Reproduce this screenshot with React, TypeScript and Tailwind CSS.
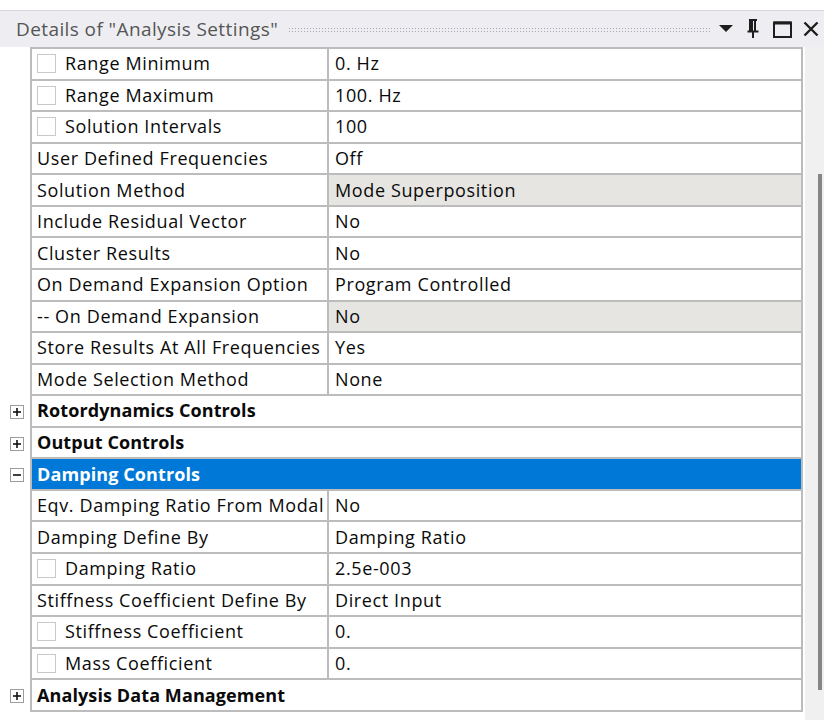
import React from "react";

type Row =
  | { kind: "prop"; label: string; value: string; check?: boolean; shaded?: boolean }
  | { kind: "group"; label: string; open?: boolean; selected?: boolean };

const rows: Row[] = [
  { kind: "prop", label: "Range Minimum", value: "0. Hz", check: true },
  { kind: "prop", label: "Range Maximum", value: "100. Hz", check: true },
  { kind: "prop", label: "Solution Intervals", value: "100", check: true },
  { kind: "prop", label: "User Defined Frequencies", value: "Off" },
  { kind: "prop", label: "Solution Method", value: "Mode Superposition", shaded: true },
  { kind: "prop", label: "Include Residual Vector", value: "No" },
  { kind: "prop", label: "Cluster Results", value: "No" },
  { kind: "prop", label: "On Demand Expansion Option", value: "Program Controlled" },
  { kind: "prop", label: "-- On Demand Expansion", value: "No", shaded: true },
  { kind: "prop", label: "Store Results At All Frequencies", value: "Yes" },
  { kind: "prop", label: "Mode Selection Method", value: "None" },
  { kind: "group", label: "Rotordynamics Controls" },
  { kind: "group", label: "Output Controls" },
  { kind: "group", label: "Damping Controls", open: true, selected: true },
  { kind: "prop", label: "Eqv. Damping Ratio From Modal", value: "No" },
  { kind: "prop", label: "Damping Define By", value: "Damping Ratio" },
  { kind: "prop", label: "Damping Ratio", value: "2.5e-003", check: true },
  { kind: "prop", label: "Stiffness Coefficient Define By", value: "Direct Input" },
  { kind: "prop", label: "Stiffness Coefficient", value: "0.", check: true },
  { kind: "prop", label: "Mass Coefficient", value: "0.", check: true },
  { kind: "group", label: "Analysis Data Management" },
];

function ExpandBox({ open }: { open?: boolean }) {
  return (
    <svg width="14" height="14" viewBox="0 0 14 14" className="block">
      <rect x="0.5" y="0.5" width="13" height="13" fill="#fff" stroke="#9c9c9c" />
      <line x1="3" y1="7" x2="11" y2="7" stroke="#111" strokeWidth="1.6" />
      {!open && <line x1="7" y1="3" x2="7" y2="11" stroke="#111" strokeWidth="1.6" />}
    </svg>
  );
}

function TitleIcons() {
  return (
    <div className="flex items-center h-full">
      {/* dropdown arrow */}
      <svg width="14" height="8" viewBox="0 0 14 8" className="ml-[7px]">
        <path d="M0 0 L14 0 L7 7 Z" fill="#1e1e1e" />
      </svg>
      {/* pin */}
      <svg width="12" height="20" viewBox="0 0 12 20" className="ml-[14px]">
        <path d="M2 1 H10 M3 1 V12 M8 1 V12 M0.5 12.5 H11.5 M6 13 V19" stroke="#1e1e1e" strokeWidth="2" fill="none" />
        <path d="M3 2 H6 V12 H3 Z" fill="#1e1e1e" />
      </svg>
      {/* maximize */}
      <svg width="19" height="17" viewBox="0 0 19 17" className="ml-[14px]">
        <rect x="1" y="1.5" width="17" height="14.5" fill="none" stroke="#1e1e1e" strokeWidth="2" />
        <line x1="1" y1="2" x2="18" y2="2" stroke="#1e1e1e" strokeWidth="3" />
      </svg>
      {/* close */}
      <svg width="16" height="16" viewBox="0 0 16 16" className="ml-[11px]">
        <path d="M1.5 1.5 L14.5 14.5 M14.5 1.5 L1.5 14.5" stroke="#1e1e1e" strokeWidth="2.4" />
      </svg>
    </div>
  );
}

function CheckBox() {
  return <div className="w-[19px] h-[19px] border border-[#c9c9c9] bg-white shrink-0" />;
}

function PropRow({ row }: { row: Extract<Row, { kind: "prop" }> }) {
  return (
    <div className="flex h-[31.57px] border-b-2 border-[#bcbcbc]">
      <div className="w-[297px] shrink-0 flex items-center pl-[5px] border-r-2 border-[#bcbcbc] overflow-hidden whitespace-nowrap">
        {row.check && (
          <>
            <CheckBox />
            <div className="w-[9px] shrink-0" />
          </>
        )}
        <span>{row.label}</span>
      </div>
      <div
        className={`flex-1 flex items-center pl-[6px] whitespace-nowrap ${
          row.shaded ? "bg-[#e6e5e2]" : "bg-white"
        }`}
      >
        {row.value}
      </div>
    </div>
  );
}

function GroupRow({ row }: { row: Extract<Row, { kind: "group" }> }) {
  return (
    <div
      className={`flex items-center h-[31.57px] border-b-2 border-[#bcbcbc] pl-[5px] font-bold tracking-[0.1px] ${
        row.selected ? "bg-[#0078d7] text-white" : "bg-white"
      }`}
    >
      {row.label}
    </div>
  );
}

export default function App() {
  return (
    <div
      className="w-[824px] h-[720px] bg-white overflow-hidden flex flex-col text-[#0a0a0a] text-[18px] font-medium tracking-[0.62px]"
      style={{ fontFamily: '"Open Sans", "Noto Sans", "Liberation Sans", sans-serif' }}
    >
      <div className="h-[10px] shrink-0 bg-white" />
      {/* panel caption */}
      <div className="h-[37px] shrink-0 bg-[#eeeef2] border-t border-[#d6d6de] flex items-center pl-[16px] pr-[5px]">
        <span className="text-[#555555] text-[19px] font-normal tracking-[0.4px] whitespace-nowrap">Details of "Analysis Settings"</span>
        <div className="flex-1 h-[6px] ml-[10px] mt-[1px] bg-[radial-gradient(circle,#a8a8b0_0.8px,transparent_1px)] bg-[length:3px_3px]" />
        <TitleIcons />
      </div>
      {/* property grid */}
      <div className="flex flex-1 min-h-0">
        <div className="w-[805px] shrink-0 flex">
          {/* expander gutter */}
          <div className="w-[30px] shrink-0 flex flex-col pt-[2px]">
            {rows.map((r, i) => (
              <div key={i} className="h-[31.57px] flex items-center pl-[10px]">
                {r.kind === "group" && <ExpandBox open={r.open} />}
              </div>
            ))}
          </div>
          <div className="w-[773px] shrink-0 self-start border-2 border-b-0 border-[#bcbcbc]">
            {rows.map((r, i) =>
              r.kind === "prop" ? <PropRow key={i} row={r} /> : <GroupRow key={i} row={r} />
            )}
          </div>
        </div>
        {/* vertical scrollbar */}
        <div className="flex-1 bg-[#f0f0f0] flex justify-end pr-[2px]">
          <div className="w-[4px] h-[516px] mt-[127px] bg-[#868686]" />
        </div>
      </div>
    </div>
  );
}
